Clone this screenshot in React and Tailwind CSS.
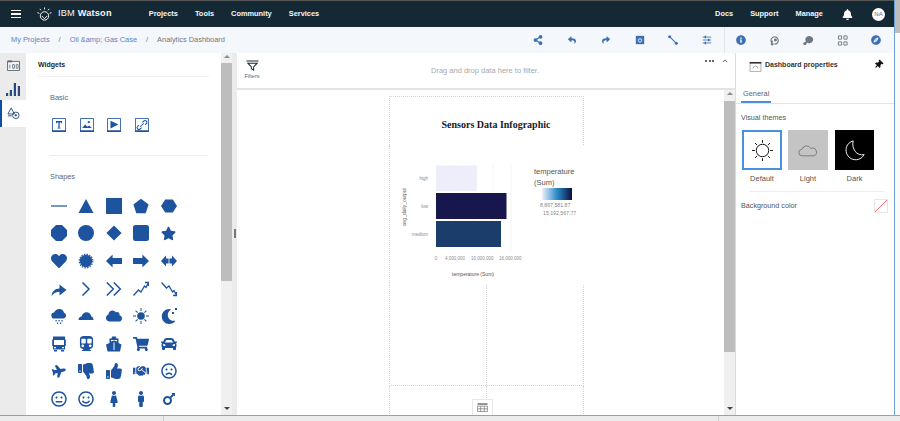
import {
  FaBell, FaCar, FaCloud, FaFemale, FaHandshake, FaHeart, FaMale, FaMars, FaMoon,
  FaPlane, FaRegFrown, FaRegMeh, FaRegSmile, FaShare, FaShoppingCart, FaStar, FaSubway,
  FaThumbsDown, FaThumbsUp, FaThumbtack, FaInfoCircle, FaCompass, FaShareAlt, FaReply,
} from 'react-icons/fa'

const P = ({ children, sw }) => (
  <svg viewBox="0 0 16 16" className="h-4 w-4" fill={sw ? 'none' : 'currentColor'} stroke={sw ? 'currentColor' : 'none'} strokeWidth={sw}>
    {children}
  </svg>
)

const fa = (Icon, cls = 'h-[15px] w-[15px]') => <Icon className={cls} />

const shapes = [
  <P sw={1.2}><path d="M0 8h16" /></P>,
  <P><path d="M8 1l7.5 14H.5z" /></P>,
  <P><path d="M0 0h16v16H0z" /></P>,
  <P><path d="M8 .8l7.6 5.6-2.9 8.8H3.3L.4 6.4z" /></P>,
  <P><path d="M4.200 1.400h7.600L16 8l-4.200 6.600H4.200L0 8z" /></P>,
  <P><path d="M5 0h6l5 5v6l-5 5H5l-5-5V5z" /></P>,
  <P><circle cx="8" cy="8" r="8" /></P>,
  <P><path d="M8 .4L15.600 8 8 15.600.4 8z" /></P>,
  <P><rect width="16" height="16" rx="2.500" /></P>,
  fa(FaStar),
  fa(FaHeart, 'h-4 w-4'),
  <P><circle cx="8" cy="8" r="6.200" /><circle cx="8" cy="8" r="6.800" fill="none" stroke="currentColor" strokeWidth="1.200" strokeDasharray="1.400 1.300" /></P>,
  <P><path d="M0 8l6.600-6.600V5H16v6H6.600v3.600z" /></P>,
  <P><path d="M16 8L9.400 1.400V5H0v6h9.400v3.600z" /></P>,
  <P><path d="M0 8l5-5.600v3.200h6V2.400L16 8l-5 5.600v-3.200H5v3.200z" /><path d="M7.600 3h.8v10h-.8z" fill="#fff" /></P>,
  <P><path d="M.5 15c.4-4.600 3.400-7.400 8-7.600V3.600L15.500 9l-7 5.400v-3.600c-3 0-5.600 1.400-8 4.200z" /></P>,
  <P sw={1.5}><path d="M4.500 1.500L11 8l-6.500 6.500" /></P>,
  <P sw={1.5}><path d="M.8 1.500L7.300 8 .8 14.500M7.800 1.500L14.300 8l-6.500 6.500" /></P>,
  <P sw={1.3}><path d="M.5 14.500l5-5.500 2.500 2 3.500-6 1.500 1.500 2.500-5M12 1.500h3.500V5" /></P>,
  <P sw={1.3}><path d="M.5 1.500l5 5.500 2.500-2 3.500 6 1.500-1.500 2.500 5M12 14.500h3.500V11" /></P>,
  <P><path d="M3.500 10.500a3 3 0 0 1-.3-6C4 2.400 6 1 8.300 1c2.600 0 4.300 1.600 4.700 3.700a3 3 0 0 1-.3 5.800z" /><path d="M4.500 12h1.200v1.500H4.500zM7.500 12h1.200v1.500H7.500zM10.500 12h1.200v1.500h-1.200zM6 14.500h1.200V16H6zM9 14.500h1.200V16H9z" /></P>,
  <P><path d="M.5 12c0-2 1.300-3.300 3-3.500C4.200 6 6 4.200 8.500 4.200c2.700 0 4.400 1.900 4.800 4.300 1.300.2 2.200 1.600 2.200 3.500z" /></P>,
  fa(FaCloud, 'h-4 w-4'),
  <P><circle cx="8" cy="8" r="3.800" /><path d="M7.500 0h1v3h-1zM7.500 13h1v3h-1zM0 7.500h3v1H0zM13 7.500h3v1h-3zM2.200 2.900l.7-.7 2.100 2.100-.7.7zM11 11.700l.7-.7 2.100 2.100-.7.7zM13.100 2.200l.7.7-2.100 2.100-.7-.7zM4.300 11l.7.7-2.100 2.100-.7-.7z" /></P>,
  <span className="relative block h-4 w-4">
    {fa(FaMoon, 'h-[15px] w-[15px] mt-[1px]')}
    <i className="absolute right-0 top-0 h-[2px] w-[2px] bg-[#1d539f]" />
    <i className="absolute right-[3px] top-[4px] h-[2px] w-[2px] bg-[#1d539f]" />
  </span>,
  <P><path d="M2 .5h12v3h.8v6.500H14v3.500H2V10h-.8V3.500H2z" /><path d="M3 4h10v5H3z" fill="#fff" /><path d="M3 11h2v1.200H3zM11 11h2v1.200h-2z" fill="#fff" /><path d="M3 14h3v1.500H3zM10 14h3v1.500h-3z" /></P>,
  fa(FaSubway),
  <P><path d="M6 .5h4l.5 2h2V7l3 1.500-1.500 7H1.500L0 8.500 3.500 7V2.500h2z" /><path d="M5 4h6v1.500l-3-1-3 1zM7.500 6.500h1V14h-1z" fill="#fff" /></P>,
  fa(FaShoppingCart, 'h-4 w-4'),
  fa(FaCar, 'h-4 w-4'),
  fa(FaPlane, 'h-[14px] w-[14px] -rotate-12'),
  fa(FaThumbsDown, 'h-4 w-4'),
  fa(FaThumbsUp, 'h-4 w-4'),
  fa(FaHandshake, 'h-4 w-4'),
  fa(FaRegFrown, 'h-4 w-4'),
  fa(FaRegMeh, 'h-4 w-4'),
  fa(FaRegSmile, 'h-4 w-4'),
  fa(FaFemale, 'h-4 w-4'),
  fa(FaMale, 'h-4 w-4'),
  fa(FaMars, 'h-4 w-4'),
]

const basic = [
  <path d="M4.500 3.500h7v2.500h-1v-1H8.700v6h1v1H6.300v-1h1v-6H5.500v1h-1z" fill="currentColor" />,
  <path d="M2.500 11.500l3.500-4 2.500 2.500 2-1.500 3 3zM10 3.500a1.300 1.300 0 1 1 0 2.600 1.300 1.300 0 0 1 0-2.600z" fill="currentColor" />,
  <path d="M4 3l9 4.500L4 12z" fill="currentColor" />,
  <path d="M6 10l4-4M4.500 8L3 9.500a2 2 0 0 0 3 3L7.500 11M8.500 5L10 3.500a2 2 0 0 1 3 3L11.500 8" fill="none" stroke="currentColor" strokeWidth="1.200" />,
]

const toolbarLeft = [
  fa(FaShareAlt, 'h-[10px] w-[10px]'),
  fa(FaReply, 'h-[8px] w-[8px]'),
  fa(FaShare, 'h-[8px] w-[8px]'),
  <svg viewBox="0 0 12 12" className="h-[10px] w-[10px]"><path d="M1 1h10v10H1z" fill="currentColor" /><circle cx="6" cy="6.500" r="2" fill="none" stroke="#fff" /></svg>,
  <svg viewBox="0 0 12 12" className="h-[10px] w-[10px]"><path d="M2 2l8 8" stroke="currentColor" strokeWidth="1.300" /><circle cx="2" cy="2" r="1.800" fill="currentColor" /><circle cx="10" cy="10" r="1.800" fill="currentColor" /></svg>,
  <svg viewBox="0 0 12 12" className="h-[10px] w-[10px]" stroke="currentColor" fill="currentColor"><path d="M1 2.500h10M1 6h10M1 9.500h10" strokeWidth="1" /><path d="M4 1v3M8 4.500v3M4 8v3" strokeWidth="1.800" /></svg>,
]

const toolbarRight = [
  <span className="text-[#3d70b2]">{fa(FaInfoCircle, 'h-[10px] w-[10px]')}</span>,
  <svg viewBox="0 0 12 12" className="h-[11px] w-[11px] text-[#6d7884]" fill="none" stroke="currentColor" strokeWidth="1.200"><path d="M3 8.500a4 4 0 1 1 3 1.500M3.500 6v5M2 9.500L3.500 11 5 9.500" /><circle cx="7" cy="5.500" r="1" fill="currentColor" /></svg>,
  <svg viewBox="0 0 12 12" className="h-[11px] w-[11px] text-[#6d7884]" fill="currentColor"><path d="M7 1a4 4 0 1 1-2.500 7.100L3 11H1.500a1.500 1.500 0 0 1 .5-3l1.200-1A4 4 0 0 1 7 1z" /></svg>,
  <svg viewBox="0 0 12 12" className="h-[11px] w-[11px] text-[#6d7884]" fill="none" stroke="currentColor"><path d="M1.500 1h3.500v3.500H1.500zM7.500 1h3.500v3.500H7.500zM1.500 7.500h3.500V11H1.500zM7.500 7.500h3.500V11H7.500z" /></svg>,
  <span className="text-[#3d70b2]">{fa(FaCompass, 'h-[10px] w-[10px]')}</span>,
]

function ArrowUp() {
  return <svg viewBox="0 0 8 4" className="h-[3px] w-[6px]"><path d="M4 0l4 4H0z" fill="#8c8c8c" /></svg>
}

function ArrowDown() {
  return <svg viewBox="0 0 8 4" className="h-[3px] w-[6px]"><path d="M0 0h8L4 4z" fill="#444" /></svg>
}

function Scrollbar({ top, thumb }) {
  return (
    <div className="flex w-[11px] shrink-0 flex-col items-center bg-[#f0f0f0]">
      <div className="flex h-[6px] items-center"><ArrowUp /></div>
      <div className={`${top} ${thumb} w-full bg-[#bdbdbd]`} />
      <div className="flex-1" />
      <div className="mb-[5px]"><ArrowDown /></div>
    </div>
  )
}

function Chart() {
  const grid = [454, 473, 492, 510]
  const label = 'fill-[#8a8a8a] text-[4.500px]'
  return (
    <svg viewBox="389 145 195 140" className="block h-[140px] w-[195px]">
      <defs>
        <linearGradient id="legend">
          <stop offset="0" stopColor="#eff0fb" />
          <stop offset="0.5" stopColor="#2a8bc9" />
          <stop offset="1" stopColor="#0d0f3d" />
        </linearGradient>
      </defs>
      {grid.map((x) => <path key={x} d={`M${x} 164V250`} stroke="#f1f1f1" strokeWidth="0.700" />)}
      <rect x="435" y="165.500" width="41" height="25.500" fill="#eeeefb" />
      <rect x="435" y="193" width="70.500" height="26" fill="#17174d" />
      <rect x="435" y="221" width="65" height="26" fill="#1b3d6c" />
      <text x="427" y="180" textAnchor="end" className={label}>high</text>
      <text x="427" y="208" textAnchor="end" className={label}>low</text>
      <text x="427" y="236" textAnchor="end" className={label}>medium</text>
      <text transform="translate(405 207) rotate(-90)" textAnchor="middle" className="fill-[#666] text-[5px]">avg_daily_output</text>
      <text x="435" y="260" textAnchor="middle" className={label}>0</text>
      <text x="444" y="260" className={label}>4,000,000</text>
      <text x="470" y="260" className={label}>10,000,000</text>
      <text x="498" y="260" className={label}>16,000,000</text>
      <text x="472" y="276" textAnchor="middle" className="fill-[#555] text-[5px]">temperature (Sum)</text>
      <text x="533" y="174" className="fill-[#555] text-[7.500px]">temperature</text>
      <text x="533" y="184.500" className="fill-[#555] text-[7.500px]">(Sum)</text>
      <rect x="541" y="188" width="30" height="12" fill="url(#legend)" />
      <text x="539" y="207" className="fill-[#888] text-[5.200px]">8,867,581.87</text>
      <text x="542" y="215" className="fill-[#888] text-[5.200px]">15,192,567.77</text>
    </svg>
  )
}

export default function App() {
  return (
    <div className="relative flex h-[421px] w-[900px] flex-col overflow-hidden bg-white font-['Liberation_Sans',sans-serif] text-[8px]">
      <div className="flex min-h-0 flex-1">
        <div className="flex min-w-0 flex-1 flex-col border-r border-[#6fa3d6]">
          <header className="flex h-[27px] shrink-0 items-center border-t border-[#555] bg-[#152935] text-[7.400px] font-bold text-[#f4f7fb]">
            <div className="ml-[11px] flex w-[10px] flex-col gap-[2px]">
              <span className="h-[1.500px] bg-white" />
              <span className="h-[1.500px] bg-white" />
              <span className="h-[1.500px] bg-white" />
            </div>
            <svg viewBox="0 0 16 16" className="ml-[16px] h-[15px] w-[15px]" fill="none" stroke="#fff" strokeWidth="1">
              <circle cx="8" cy="9.500" r="4.500" />
              <path d="M5 9.500l3 3 3-3M8 .5v2M3 2l1.300 1.500M13 2l-1.300 1.500M.5 6l2 .8M15.500 6l-2 .8" />
            </svg>
            <span className="ml-[6px] text-[9.200px] font-normal tracking-[0.2px]">IBM <b>Watson</b></span>
            <nav className="ml-[37px] flex gap-[17px]">
              <span>Projects</span>
              <span>Tools</span>
              <span>Community</span>
              <span>Services</span>
            </nav>
            <nav className="ml-auto flex gap-[17px]">
              <span>Docs</span>
              <span>Support</span>
              <span>Manage</span>
            </nav>
            <FaBell className="ml-[19px] h-[11px] w-[11px] text-white" />
            <span className="ml-[19px] mr-[9px] flex h-[13px] w-[13px] items-center justify-center rounded-full bg-white text-[6px] font-normal text-[#5a6872]">NA</span>
          </header>

          <div className="flex h-[26px] shrink-0 items-center bg-[#f4f7fb] pl-[11px] text-[7.400px] text-[#5b83bb]">
            <span>My Projects</span>
            <span className="mx-[9px] text-[#6d7884]">/</span>
            <span>Oil &amp;amp; Gas Case</span>
            <span className="mx-[9px] text-[#6d7884]">/</span>
            <span className="text-[#6d7884]">Analytics Dashboard</span>
            <div className="ml-auto mr-[1px] flex h-full items-center text-[#3d70b2]">
              {toolbarLeft.map((icon, i) => (
                <span key={i} className="flex w-[33.800px] justify-center">{icon}</span>
              ))}
              {toolbarRight.map((icon, i) => (
                <span key={i} className={`${i === 0 ? 'h-full items-center border-l border-[#e3e6ea]' : ''} flex w-[33.800px] justify-center`}>{icon}</span>
              ))}
            </div>
          </div>

          <main className="flex min-h-0 flex-1">
            <aside className="flex w-[26px] shrink-0 flex-col bg-[#ebebeb] text-[#264a7c]">
              <div className="flex h-[24px] items-center justify-center">
                <svg viewBox="0 0 14 12" className="h-[11px] w-[13px] text-[#5a6872]" fill="none" stroke="currentColor">
                  <path d="M.5 1.500h13v10H.5z" fill="#f4f4f4" />
                  <path d="M.5 1.500h5" strokeWidth="2" />
                  <path d="M3 5v4M6 5h2v4H6zM10 5h2v4h-2z" strokeWidth="0.800" />
                </svg>
              </div>
              <div className="flex h-[23px] items-center justify-center">
                <svg viewBox="0 0 14 14" className="h-[14px] w-[14px]" fill="currentColor">
                  <path d="M0 11h2.200v3H0zM3.800 8H6v6H3.800zM7.800 1H10v13H7.800zM11.800 4H14v10h-2.200z" />
                </svg>
              </div>
              <div className="flex h-[27px] items-center justify-center border-l-2 border-[#0f4fa8] bg-white pr-[2px]">
                <svg viewBox="0 0 14 14" className="h-[13px] w-[13px]" fill="none" stroke="#264a7c" strokeWidth="1">
                  <path d="M4.500 1L8 7.500H1zM1 9.500h4" />
                  <circle cx="9.500" cy="9" r="3.500" />
                  <circle cx="9.500" cy="9" r="0.800" fill="#264a7c" />
                </svg>
              </div>
            </aside>

            <section className="w-[195px] shrink-0 overflow-hidden">
              <div className="mx-[12px] border-b border-[#eeeeee] pb-[7px] pt-[7px] text-[7px] font-bold leading-[9px] text-[#1f1f1f]">Widgets</div>
              <div className="ml-[24px] mr-[13px] mt-[16px] border-b border-[#eeeeee] pb-[23px]">
                <div className="text-[7.400px] leading-[9px] text-[#666]">Basic</div>
                <div className="mt-[16px] flex">
                  {basic.map((d, i) => (
                    <span key={i} className="flex w-[27.500px] justify-start">
                      <svg viewBox="0 0 16 16" className="ml-[2px] h-[14px] w-[14px] text-[#1d539f]">
                        <path d="M.5.5h15v15H.5z" fill="#fff" stroke="currentColor" />
                        <path d="M0 14h16v2H0z" fill="currentColor" />
                        {d}
                      </svg>
                    </span>
                  ))}
                </div>
              </div>
              <div className="ml-[24px] mt-[16px] text-[7.400px] leading-[9px] text-[#666]">Shapes</div>
              <div className="ml-[19px] mt-[11px] grid grid-cols-[repeat(5,27.500px)] auto-rows-[27.600px] text-[#1d539f]">
                {shapes.map((icon, i) => (
                  <span key={i} className="flex items-center justify-center">{icon}</span>
                ))}
              </div>
            </section>

            <Scrollbar top="mt-[4px]" thumb="h-[218px]" />

            <div className="relative w-[5px] shrink-0 bg-[#ebebeb]">
              <span className="absolute left-[2px] top-[176px] h-[9px] w-[2px] bg-[#777]" />
            </div>

            <section className="flex min-w-0 flex-1 flex-col">
              <div className="flex h-[37px] shrink-0 border-b-2 border-[#e3e3e3]">
                <div className="ml-[7px] flex w-[16px] flex-col items-center pt-[7px]">
                  <svg viewBox="0 0 14 11" className="h-[11px] w-[13px]" fill="none" stroke="#152935" strokeWidth="1.100">
                    <path d="M.5.6h13M2 3h10L8.200 7v3.500L5.800 9V7z" />
                  </svg>
                  <span className="mt-[2px] whitespace-nowrap text-[5.500px] leading-[7px] text-[#5a6872]">Filters</span>
                </div>
                <span className="flex-1 pl-[5px] pt-[13px] text-center text-[7.500px] leading-[10px] text-[#a8a8a8]">Drag and drop data here to filter.</span>
                <div className="flex h-[10px] items-center gap-[8px] pr-[7px] pt-[5px]">
                  <span className="flex gap-[1.500px]">
                    <i className="h-[2px] w-[2px] rounded-full bg-[#333]" />
                    <i className="h-[2px] w-[2px] rounded-full bg-[#333]" />
                    <i className="h-[2px] w-[2px] rounded-full bg-[#333]" />
                  </span>
                  <svg viewBox="0 0 8 5" className="h-[4px] w-[6px]" fill="none" stroke="#333"><path d="M1 4l3-3 3 3" /></svg>
                </div>
              </div>
              <div className="flex min-h-0 flex-1">
                <div className="relative flex-1 overflow-hidden">
                  <div className="ml-[152px] mt-[6px] w-[195px]">
                    <div className="h-[49px] border-l border-r border-t border-dotted border-[#d4d4d4] pl-[19px] pt-[21px] text-center font-['Liberation_Serif',serif] text-[10px] font-bold leading-[13px] text-[#1a1a1a]">
                      Sensors Data Infographic
                    </div>
                    <div className="border-l border-dotted border-[#d4d4d4]">
                      <Chart />
                    </div>
                    <div className="grid h-[101px] grid-cols-2 border-b border-r border-l border-dotted border-[#d4d4d4]">
                      <div className="border-r border-dotted border-[#d4d4d4]" />
                    </div>
                    <div className="grid h-[40px] grid-cols-2 border-r border-l border-dotted border-[#d4d4d4]">
                      <div className="border-r border-dotted border-[#d4d4d4]" />
                    </div>
                  </div>
                  <div className="absolute bottom-0 left-[235px] flex h-[16px] w-[21px] items-center justify-center border-x border-t border-[#e8e8e8] bg-white">
                    <svg viewBox="0 0 12 10" className="h-[9px] w-[11px]" fill="none" stroke="#777" strokeWidth="0.800">
                      <path d="M.5 1.500h11M.5 3.500h11v6H.5zM.5 6.500h11M4 3.500v6M8 3.500v6" />
                      <path d="M.5 1h11" strokeWidth="1.400" />
                    </svg>
                  </div>
                </div>
                <Scrollbar top="mt-[5px]" thumb="h-[251px]" />
              </div>
            </section>

            <aside className="w-[159px] shrink-0 border-l border-[#dcdcdc]">
              <div className="flex h-[28px] items-start px-[13px] pt-[7px]">
                <svg viewBox="0 0 14 12" className="mt-[2px] h-[10px] w-[13px]" fill="none" stroke="#8a8a8a" strokeWidth="0.800">
                  <path d="M.5.5h13v11H.5z" />
                  <path d="M0 1h14" stroke="#111" strokeWidth="1.600" />
                  <path d="M4 8a3 3 0 0 1 6 0" />
                </svg>
                <span className="ml-[3px] whitespace-nowrap text-[7px] font-bold leading-[9px] text-[#333]">Dashboard properties</span>
                <FaThumbtack className="ml-auto -mr-[2px] h-[9px] w-[9px] rotate-45 text-[#111]" />
              </div>
              <div className="border-b border-[#e3e3e3] px-[5px] pt-[7px]">
                <span className="inline-block border-b-2 border-[#4a90d9] px-[2px] pb-[2px] text-[7.400px] leading-[11px] text-[#666]">General</span>
              </div>
              <div className="px-[5px] pt-[9px] text-[7.200px] leading-[9px] text-[#555]">Visual themes</div>
              <div className="ml-[6px] mt-[8px] flex gap-[6px]">
                <div className="flex w-[40px] flex-col items-center">
                  <div className="flex h-[40px] w-[40px] items-center justify-center border-2 border-[#4a8fe0] bg-white">
                    <svg viewBox="0 0 24 24" className="h-[23px] w-[23px]" fill="none" stroke="#111" strokeWidth="1">
                      <circle cx="12" cy="12" r="6.500" />
                      <path d="M12 1v3M12 20v3M1 12h3M20 12h3M4.200 4.200l2.200 2.200M17.600 17.600l2.200 2.200M19.800 4.200l-2.200 2.200M6.400 17.600l-2.200 2.200" />
                    </svg>
                  </div>
                  <span className="mt-[4px] text-[7.500px] leading-[9px] text-[#555]">Default</span>
                </div>
                <div className="flex w-[40px] flex-col items-center">
                  <div className="flex h-[40px] w-[40px] items-center justify-center bg-[#c4c4c4]">
                    <svg viewBox="0 0 24 16" className="h-[13px] w-[22px]" fill="none" stroke="#6d6d6d" strokeWidth="1">
                      <path d="M5 14.500a4 4 0 0 1-.5-8 6 6 0 0 1 11-1 4.500 4.500 0 0 1 4 9z" />
                    </svg>
                  </div>
                  <span className="mt-[4px] text-[7.500px] leading-[9px] text-[#555]">Light</span>
                </div>
                <div className="ml-[1px] flex w-[39px] flex-col items-center">
                  <div className="flex h-[40px] w-[39px] items-center justify-center bg-black">
                    <svg viewBox="0 0 24 24" className="h-[22px] w-[22px]" fill="none" stroke="#fff" strokeWidth="1">
                      <path d="M10 2a10.500 10.500 0 1 0 12 15c-8 2-14-6-12-15z" />
                    </svg>
                  </div>
                  <span className="mt-[4px] text-[7.500px] leading-[9px] text-[#555]">Dark</span>
                </div>
              </div>
              <div className="ml-[13px] mr-[10px] mt-[8px] border-t border-[#eeeeee]" />
              <div className="flex items-center px-[5px] pt-[7px] text-[7.200px] text-[#555]">
                <span>Background color</span>
                <svg viewBox="0 0 14 14" className="ml-auto mr-[1px] h-[14px] w-[14px]" fill="none">
                  <path d="M.5.5h13v13H.5z" stroke="#e6e6e6" />
                  <path d="M1 13L13 1" stroke="#f26d6d" />
                </svg>
              </div>
            </aside>
          </main>
        </div>

        <div className="w-[5px] shrink-0 bg-[#fafafa]">
          <div className="h-[33px] bg-[#bdbdbd]" />
        </div>
      </div>

      <footer className="flex h-[6px] shrink-0 overflow-hidden border-t border-[#7ba7d2] bg-[#ececec]">
        <span className="w-[164px] shrink-0 border-r border-[#cfcfcf]" />
        <span className="ml-[56px] mt-[3px] whitespace-nowrap text-[8px] leading-[9px] text-[#333]">Linked Data</span>
        <span className="ml-auto mr-[181px] w-px bg-[#cfcfcf]" />
      </footer>
    </div>
  )
}
